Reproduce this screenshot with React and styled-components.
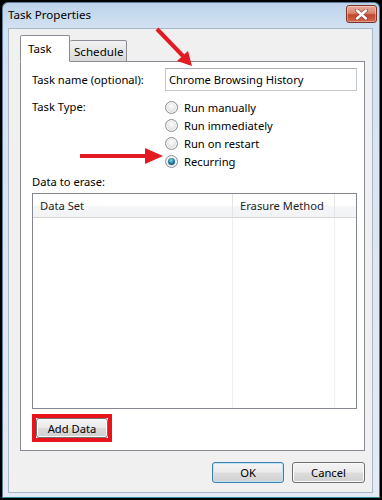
import React from 'react';
import styled, { createGlobalStyle } from 'styled-components';

const GlobalStyle = createGlobalStyle`
  html, body {
    margin: 0;
    padding: 0;
    background: #000;
  }
  body {
    font-family: "Noto Sans", "Liberation Sans", sans-serif;
    font-size: 11.2px;
    color: #000;
  }
`;

const Screen = styled.div`
  position: relative;
  width: 382px;
  height: 500px;
  box-sizing: border-box;
  padding: 2px;
  background: #000;
`;

const Window = styled.div`
  height: 100%;
  box-sizing: border-box;
  display: flex;
  flex-direction: column;
  border: 1px solid #5f7d9c;
  border-right-color: #2b8d9c;
  border-bottom-color: #2b8d9c;
  border-radius: 6px 6px 0 0;
  background: linear-gradient(to bottom, #bcd2ea 0, #d3e2f2 25px, #dce7f3 50%, #e4ebf4 100%);
`;

const TitleBar = styled.div`
  height: 25px;
  flex: none;
  display: flex;
  justify-content: space-between;
  padding: 0 2px 0 5px;
`;

const Title = styled.span`
  line-height: 24px;
  font-size: 11.6px;
  color: #000;
`;

const CloseButton = styled.div`
  margin-top: 2px;
  width: 31px;
  height: 18px;
  box-sizing: border-box;
  border: 1px solid #7e3528;
  border-radius: 3px;
  background: linear-gradient(to bottom, #e9a99b 0, #d98570 45%, #c2472f 55%, #cf6a4c 100%);
  box-shadow: inset 0 0 0 1px rgba(255, 255, 255, 0.35);
  display: flex;
  align-items: center;
  justify-content: center;
`;

const Body = styled.div`
  flex: 1;
  display: flex;
  flex-direction: column;
  margin: 0 6px 4px 5px;
  padding: 6px 7px 9px 11px;
  background: #f0f0f0;
  border: 1px solid #a9b8c8;
`;

const TabStrip = styled.div`
  display: flex;
  align-items: flex-end;
  position: relative;
  z-index: 1;
  margin-bottom: -1px;
`;

const Tab = styled.div`
  box-sizing: border-box;
  height: ${p => (p.$active ? 27 : 22)}px;
  width: ${p => p.$width}px;
  padding-left: ${p => (p.$active ? 7 : 4)}px;
  display: flex;
  align-items: center;
  border: 1px solid #898c95;
  border-bottom-color: ${p => (p.$active ? '#fff' : '#898c95')};
  border-left-width: ${p => (p.$first ? 1 : 0)}px;
  border-radius: 2px 2px 0 0;
  background: ${p => (p.$active ? '#fff' : 'linear-gradient(to bottom, #f2f2f2, #e6e6e6 50%, #d9d9d9)')};
  font-size: 11.6px;
`;

const Panel = styled.div`
  flex: 1;
  display: flex;
  flex-direction: column;
  background: #fff;
  border: 1px solid #898c95;
  padding: 6px 7px 0 11px;
`;

const FieldRow = styled.div`
  display: flex;
  align-items: ${p => p.$align || 'center'};
  margin-top: ${p => p.$top || 0}px;
`;

const Label = styled.div`
  width: 133px;
  flex: none;
  line-height: 18px;
`;

const TextBox = styled.div`
  flex: 1;
  height: 23px;
  box-sizing: border-box;
  border: 1px solid #c5c8ce;
  border-top-color: #abadb3;
  padding-left: 3px;
  display: flex;
  align-items: center;
`;

const RadioGroup = styled.div`
  display: flex;
  flex-direction: column;
`;

const RadioRow = styled.div`
  height: 18px;
  display: flex;
  align-items: center;
  gap: 6px;
`;

const Radio = styled.span`
  position: relative;
  width: 13px;
  height: 13px;
  box-sizing: border-box;
  border-radius: 50%;
  border: 1px solid #8c8f93;
  background: radial-gradient(circle at 50% 40%, #fdfdfd 0, #e4e4e4 55%, #c9c9c9 100%);
  box-shadow: inset 0 0 0 1px #f6f6f6;
  &::after {
    content: '';
    display: ${p => (p.$checked ? 'block' : 'none')};
    position: absolute;
    left: 2px;
    top: 2px;
    width: 7px;
    height: 7px;
    border-radius: 50%;
    background: radial-gradient(circle at 45% 35%, #8ad6ea 0, #2b7fa3 45%, #0e3f5a 100%);
  }
`;

const Caption = styled.div`
  line-height: 18px;
  margin-top: ${p => p.$top || 0}px;
`;

const ListBox = styled.div`
  margin-top: 2px;
  height: 216px;
  box-sizing: border-box;
  border: 1px solid #828790;
  display: grid;
  grid-template-columns: 200px 102px 1fr;
  grid-template-rows: 24px 1fr;
`;

const HeaderCell = styled.div`
  display: flex;
  align-items: center;
  padding-left: 7px;
  background: linear-gradient(to bottom, #fff 0, #fff 50%, #f5f6f8 51%, #f2f3f5 100%);
  border-bottom: 1px solid #d5d5d5;
  border-right: ${p => (p.$last ? 'none' : '1px solid #e2e4e8')};
  color: #1e1e1e;
`;

const BodyCell = styled.div`
  border-right: ${p => (p.$last ? 'none' : '1px solid #eeeeee')};
`;

const Highlight = styled.div`
  align-self: flex-start;
  margin-top: 5px;
  border: 4px solid #e8131b;
`;

const Button = styled.div`
  box-sizing: border-box;
  width: ${p => p.$width}px;
  height: ${p => p.$height || 21}px;
  display: flex;
  align-items: center;
  justify-content: center;
  border: 1px solid ${p => (p.$default ? '#3c7fb1' : '#707070')};
  border-radius: 3px;
  background: linear-gradient(to bottom, #f4f4f4 0, #ebebeb 48%, #dddddd 52%, #cfcfcf 100%);
  box-shadow: inset 0 0 0 1px ${p => (p.$default ? '#bfe3f7' : '#fbfbfb')};
`;

const Footer = styled.div`
  margin-top: 11px;
  display: flex;
  justify-content: flex-end;
  gap: 8px;
`;

const Overlay = styled.svg`
  position: absolute;
  left: 0;
  top: 0;
  pointer-events: none;
`;

const radios = [
  { label: 'Run manually' },
  { label: 'Run immediately' },
  { label: 'Run on restart' },
  { label: 'Recurring', checked: true },
];

export default function App() {
  return (
    <Screen>
      <GlobalStyle />
      <Window>
        <TitleBar>
          <Title>Task Properties</Title>
          <CloseButton>
            <svg width="13" height="11" viewBox="0 0 13 11">
              <path d="M2 1.5 L11 9.5 M11 1.5 L2 9.5" stroke="#6b2a1f" strokeWidth="4" strokeLinecap="round" opacity="0.55" />
              <path d="M2 1.5 L11 9.5 M11 1.5 L2 9.5" stroke="#fff" strokeWidth="2.4" strokeLinecap="round" />
            </svg>
          </CloseButton>
        </TitleBar>
        <Body>
          <TabStrip>
            <Tab $active $first $width={50}>Task</Tab>
            <Tab $width={57}>Schedule</Tab>
          </TabStrip>
          <Panel>
            <FieldRow>
              <Label>Task name (optional):</Label>
              <TextBox>Chrome Browsing History</TextBox>
            </FieldRow>
            <FieldRow $align="flex-start" $top={7}>
              <Label>Task Type:</Label>
              <RadioGroup>
                {radios.map(r => (
                  <RadioRow key={r.label}>
                    <Radio $checked={r.checked} />
                    {r.label}
                  </RadioRow>
                ))}
              </RadioGroup>
            </FieldRow>
            <Caption $top={3}>Data to erase:</Caption>
            <ListBox>
              <HeaderCell>Data Set</HeaderCell>
              <HeaderCell>Erasure Method</HeaderCell>
              <HeaderCell $last />
              <BodyCell />
              <BodyCell />
              <BodyCell $last />
            </ListBox>
            <Highlight>
              <Button $width={72} $height={20}>Add Data</Button>
            </Highlight>
          </Panel>
          <Footer>
            <Button $default $width={72}>OK</Button>
            <Button $width={73}>Cancel</Button>
          </Footer>
        </Body>
      </Window>
      <Overlay width="382" height="500" viewBox="0 0 382 500">
        <line x1="157" y1="29" x2="183" y2="56" stroke="#e31a22" strokeWidth="4" />
        <polygon points="192,66 177,61 188,51" fill="#e31a22" />
        <line x1="80" y1="156" x2="148" y2="156" stroke="#e31a22" strokeWidth="4" />
        <polygon points="145,148 163,156 145,164" fill="#e31a22" />
      </Overlay>
    </Screen>
  );
}
